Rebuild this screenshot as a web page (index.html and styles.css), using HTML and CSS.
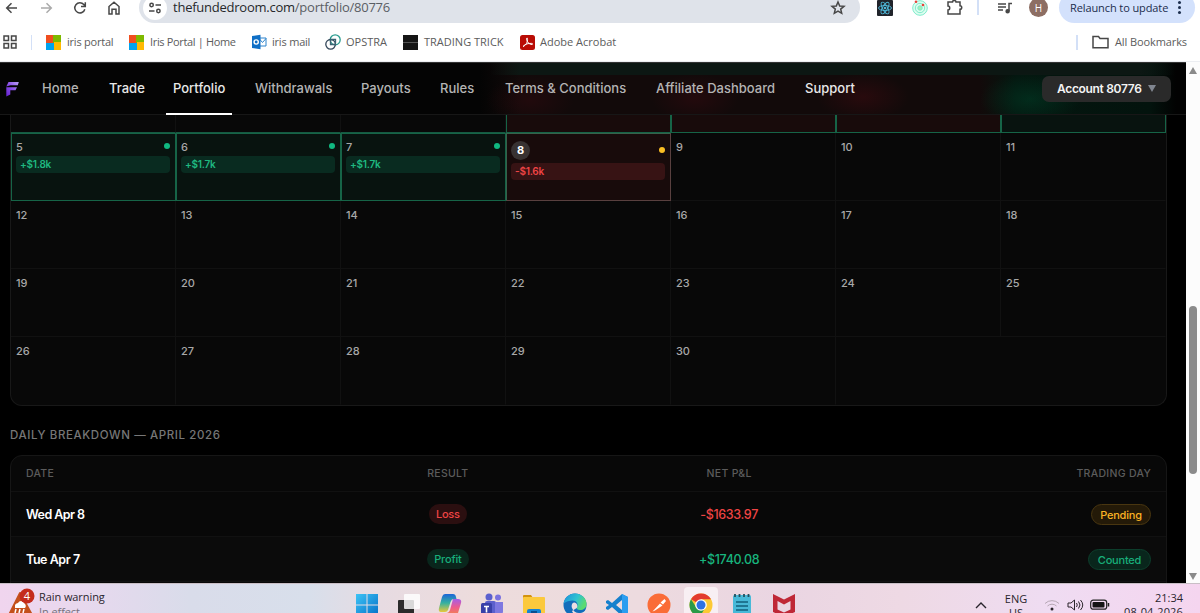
FILE: index.html
```html
<!DOCTYPE html>
<html lang="en">
<head>
<meta charset="utf-8">
<title>Portfolio</title>
<link rel="stylesheet" href="styles.css">
</head>
<body>
<header class="toolbar">
  <div class="nav-icons">
    <svg width="16" height="16" viewBox="0 0 16 16" class="ico"><path d="M13 8H3M7.500 3.200 2.700 8l4.800 4.800"/></svg>
    <svg width="16" height="16" viewBox="0 0 16 16" class="ico dim"><path d="M3 8h10M8.500 3.200 13.300 8l-4.800 4.800"/></svg>
    <svg width="16" height="16" viewBox="0 0 16 16" class="ico"><path d="M12.800 9.200A5.100 5.100 0 1 1 11.800 4.600L13 6M13.300 2.200V6.400H9"/></svg>
    <svg width="16" height="16" viewBox="0 0 16 16" class="ico"><path d="M3 14V6.500L8 2.300l5 4.200V14H10V9.300H6V14Z"/></svg>
  </div>
  <div class="address">
    <span class="site-info"><svg width="14" height="14" viewBox="0 0 14 14" class="ico"><circle cx="3.600" cy="4" r="1.700"/><path d="M7.500 4H13M1 10h5.500"/><circle cx="10.400" cy="10" r="1.700"/></svg></span>
    <span class="url"><b>thefundedroom.com</b>/portfolio/80776</span>
    <svg width="16" height="16" viewBox="0 0 16 16" class="ico star"><path d="m8 2 1.700 4 4.300.3-3.300 2.800 1 4.200L8 11.100l-3.700 2.200 1-4.200L2 6.300 6.300 6Z"/></svg>
  </div>
  <div class="extensions">
    <svg class="x-react" width="16" height="16" viewBox="0 0 16 16"><rect width="16" height="16" rx="1" fill="#20232a"/><g fill="none" stroke="#4fb9da" stroke-width=".9"><ellipse cx="8" cy="8" rx="6.500" ry="2.500"/><ellipse cx="8" cy="8" rx="6.500" ry="2.500" transform="rotate(60 8 8)"/><ellipse cx="8" cy="8" rx="6.500" ry="2.500" transform="rotate(120 8 8)"/></g><circle cx="8" cy="8" r="1.300" fill="#4fb9da"/></svg>
    <svg class="x-radar" width="16" height="16" viewBox="0 0 16 16"><g fill="#dffdf0" stroke="#7deccb"><circle cx="8" cy="8" r="7.300"/><circle cx="8" cy="8" r="4.700"/><circle cx="8" cy="8" r="2.200" fill="#a8efb6"/></g><circle cx="4" cy="1.800" r="1.300" fill="#e8433a"/><circle cx="11" cy="5" r="1.300" fill="#e8433a"/></svg>
    <svg class="x-puzzle ico" width="17" height="17" viewBox="0 0 17 17"><path d="M2 3h4.500c0-2 3.500-2 3.500 0h4v3.700c2.300 0 2.300 3.600 0 3.600V15H2v-4c2.300 0 2.300-4 0-4Z"/></svg>
    <i class="divider"></i>
    <svg class="x-music ico" width="16" height="14" viewBox="0 0 16 14"><path d="M1 3h8M1 6h8M1 9h5M12 10V2.500h3"/><circle cx="10.600" cy="10.300" r="1.500" fill="#474747"/></svg>
    <span class="avatar">H</span>
    <span class="relaunch"><span class="relaunch-text">Relaunch to update</span><i class="kebab"></i></span>
  </div>
</header>

<nav class="bookmarks">
  <svg class="ico apps" width="14" height="14" viewBox="0 0 14 14"><path d="M1 1h4.500v4.500H1ZM8.500 1H13v4.500H8.500ZM1 8.500h4.500V13H1ZM8.500 8.500H13V13H8.500Z"/></svg>
  <i class="divider"></i>
  <span class="bm bm1"><i class="ms"></i><span>iris portal</span></span>
  <span class="bm bm2"><i class="ms"></i><span>Iris Portal | Home</span></span>
  <span class="bm bm3"><svg width="16" height="16" viewBox="0 0 16 16"><path d="M8 4h7v8H8Z" fill="#fff" stroke="#2c83cc"/><path d="m8 4.500 3.500 4L15 4.500" fill="none" stroke="#2c83cc"/><path d="M1 2 9.500.7v14.600L1 14Z" fill="#0f6fc6"/><circle cx="5.200" cy="8" r="2.100" fill="none" stroke="#fff" stroke-width="1.400"/></svg><span>iris mail</span></span>
  <span class="bm bm4"><svg width="16" height="16" viewBox="0 0 16 16" fill="none" stroke-width="1.300"><circle cx="10.200" cy="5.800" r="5" stroke="#2a9c8f"/><circle cx="5.600" cy="10.300" r="4.800" stroke="#34475a"/><path d="M5.500 5.500h5v5h-5Z" stroke="#3b6373"/></svg><span>OPSTRA</span></span>
  <span class="bm bm5"><i class="black"></i><span>TRADING TRICK</span></span>
  <span class="bm bm6"><svg width="15" height="15" viewBox="0 0 15 15"><rect width="15" height="15" rx="2.500" fill="#b90c05"/><path d="M3 11.500c3-1 5-5 4.500-8-.2-1-1.200-.5-1 .7.500 3 3 5.500 5.500 5.300 1-.1.800-1-.3-1.100C8.500 8.200 5 9 3 11.500Z" fill="none" stroke="#fff" stroke-width="1"/></svg><span>Adobe Acrobat</span></span>
  <span class="all-bm"><i class="divider"></i><svg class="ico" width="17" height="14" viewBox="0 0 17 14"><path d="M1 1.500h5.500l1.500 2h8v9.200H1Z"/></svg><span>All Bookmarks</span></span>
</nav>

<div class="viewport">
  <main class="page">
    <div class="site-nav">
      <svg class="logo" width="14" height="16" viewBox="0 0 14 16"><defs><linearGradient id="lg" x1="1" y1="0" x2="0" y2="1"><stop offset="0" stop-color="#b9a0f5"/><stop offset=".5" stop-color="#8b4fe8"/><stop offset="1" stop-color="#6420d0"/></linearGradient></defs><path d="M3.500 1h10.300l-1 3.200H5.500L1.300 5.500ZM1.300 6.300H12l-1.500 3H5.300V13.500L1.300 15.500Z" fill="url(#lg)"/></svg>
      <div class="links">
        <a class="l1">Home</a><a class="l2 bright">Trade</a><a class="l3 bright active">Portfolio</a><a class="l4">Withdrawals</a><a class="l5">Payouts</a><a class="l6">Rules</a><a class="l7">Terms &amp; Conditions</a><a class="l8">Affiliate Dashboard</a><a class="l9 bright">Support</a>
      </div>
      <div class="account"><span>Account 80776</span><i></i></div>
    </div>

    <section class="calendar">
      <div class="cell"></div><div class="cell"></div><div class="cell"></div>
      <div class="cell loss counted"></div><div class="cell loss counted"></div><div class="cell loss counted"></div><div class="cell profit counted"></div>

      <div class="cell profit counted"><div class="top"><span>5</span><i class="dot"></i></div><div class="amount">+$1.8k</div></div>
      <div class="cell profit counted"><div class="top"><span>6</span><i class="dot"></i></div><div class="amount">+$1.7k</div></div>
      <div class="cell profit counted"><div class="top"><span>7</span><i class="dot"></i></div><div class="amount">+$1.7k</div></div>
      <div class="cell loss today"><div class="top"><span class="badge">8</span><i class="dot"></i></div><div class="amount">-$1.6k</div></div>
      <div class="cell"><div class="top">9</div></div>
      <div class="cell"><div class="top">10</div></div>
      <div class="cell"><div class="top">11</div></div>

      <div class="cell"><div class="top">12</div></div><div class="cell"><div class="top">13</div></div><div class="cell"><div class="top">14</div></div><div class="cell"><div class="top">15</div></div><div class="cell"><div class="top">16</div></div><div class="cell"><div class="top">17</div></div><div class="cell"><div class="top">18</div></div>
      <div class="cell"><div class="top">19</div></div><div class="cell"><div class="top">20</div></div><div class="cell"><div class="top">21</div></div><div class="cell"><div class="top">22</div></div><div class="cell"><div class="top">23</div></div><div class="cell"><div class="top">24</div></div><div class="cell"><div class="top">25</div></div>
      <div class="cell"><div class="top">26</div></div><div class="cell"><div class="top">27</div></div><div class="cell"><div class="top">28</div></div><div class="cell"><div class="top">29</div></div><div class="cell"><div class="top">30</div></div>
    </section>

    <h2 class="heading">DAILY BREAKDOWN — APRIL 2026</h2>

    <section class="table">
      <div class="row head"><span>DATE</span><span>RESULT</span><span>NET P&amp;L</span><span>TRADING DAY</span></div>
      <div class="row"><span class="date">Wed Apr 8</span><span><em class="pill red w38">Loss</em></span><span class="net neg">-$1633.97</span><span><em class="pill amber">Pending</em></span></div>
      <div class="row"><span class="date">Tue Apr 7</span><span><em class="pill green w42">Profit</em></span><span class="net pos">+$1740.08</span><span><em class="pill green lined">Counted</em></span></div>
    </section>
  </main>
  <aside class="scrollbar"><i class="up"></i><i class="thumb"></i><i class="down"></i></aside>
</div>

<footer class="taskbar">
  <div class="weather">
    <svg width="28" height="28" viewBox="0 0 28 28"><path d="M12 5 24 27H1Z" fill="#c4501b" stroke="#c4501b" stroke-width="2" stroke-linejoin="round"/><path d="M7 19a3.500 3.500 0 0 1 3-4 3.500 3.500 0 0 1 6.500.5A3 3 0 0 1 17 20H7Z" fill="#fff"/><path d="m8 21-1 4M12 21l-1 4M16 21l-1 4" stroke="#fff" stroke-width="1.500"/><circle cx="19" cy="8" r="7.500" fill="#c42b1c"/><text x="19" y="12" text-anchor="middle" class="count">4</text></svg>
    <div class="weather-text"><span class="w1">Rain warning</span><span class="w2">In effect</span></div>
  </div>
  <div class="apps-row">
    <svg viewBox="0 0 24 24"><defs><linearGradient id="wg" x1="0" y1="0" x2="1" y2="1"><stop offset="0" stop-color="#3cc3f5"/><stop offset="1" stop-color="#0670c8"/></linearGradient></defs><path d="M1 1h10.500v10.500H1ZM12.500 1H23v10.500H12.500ZM1 12.500h10.500V23H1ZM12.500 12.500H23V23H12.500Z" fill="url(#wg)"/></svg>
    <svg viewBox="0 0 24 24"><rect x="1" y="7" width="16" height="15" rx="1" fill="#2b2b2b"/><rect x="7" y="1" width="16" height="15" rx="1" fill="#fff" fill-opacity=".82"/></svg>
    <svg viewBox="0 0 24 24"><defs><linearGradient id="cg" x1="0" y1="0" x2="0" y2="1"><stop offset="0" stop-color="#1b66d8"/><stop offset=".5" stop-color="#35b1a0"/><stop offset="1" stop-color="#e8c83a"/></linearGradient><linearGradient id="ch" x1="0" y1="0" x2="0" y2="1"><stop offset="0" stop-color="#a65ce8"/><stop offset=".5" stop-color="#ee5b8c"/><stop offset="1" stop-color="#f28b45"/></linearGradient></defs><path d="M7 1h8q2.500 0 3 3l.5 2h-3q-2 0-3 3l-2.500 8q-.8 2-3 2H3q-3 0-2-4L4 4q.8-3 3-3Z" fill="url(#cg)"/><path d="M15 6h5q4 0 3 4l-3 10q-1 3-4 3H8q-2 0-2.500-3H9q2 0 3-3Z" fill="url(#ch)"/></svg>
    <svg viewBox="0 0 24 24"><circle cx="9" cy="4" r="3.500" fill="#5b60ce"/><circle cx="18" cy="4.500" r="3" fill="#7b72df"/><rect x="5" y="8" width="11" height="15" rx="2" fill="#5b5fcc"/><path d="M15 9h8v9q0 4-4 5h-4Z" fill="#7e78e0"/><rect x="1" y="10" width="11" height="13" rx="1.500" fill="#3940a8"/><path d="M4 13.500h5M6.500 13.500v6" stroke="#fff" stroke-width="1.600"/></svg>
    <svg viewBox="0 0 24 24"><path d="M1 3q0-1 1-1h7l2 3H1Z" fill="#d3930f"/><rect y="4" x="1" width="22" height="19" rx="1" fill="#fbc93d"/><path d="M5 23v-5q0-2 2-2h10q2 0 2 2v5Z" fill="#1683d4"/><path d="M9 19h6" stroke="#0a4d90" stroke-width="2"/></svg>
    <svg viewBox="0 0 24 24"><defs><linearGradient id="eg" x1="0" y1="0" x2="1" y2=".4"><stop offset="0" stop-color="#1c8fdc"/><stop offset=".6" stop-color="#2fc3d0"/><stop offset="1" stop-color="#5bdb70"/></linearGradient></defs><circle cx="12" cy="12" r="11.500" fill="#126dbb"/><path d="M.7 11C1 5 6 .5 12 .5S23.500 5 23.500 11c0 4-3 6-6.500 6-3 0-4-1.500-3-3 2-3-1-7-5-6.500C5 8 1.500 9 .7 11Z" fill="url(#eg)"/><path d="M13.700 15c1.500-2 .3-5-2.200-5.500-2.500 0-3.500 3-2.500 5.500 1 3 4 5 7 5 3 .2 5-1 7-3l1 7h-6c-4 0-8-3-9-6Z" fill="#eadde2"/></svg>
    <svg viewBox="0 0 24 24"><path d="M17 1 23 4v16l-6 3L7 14l-4 3-2-1v-2l3-2-3-2V8l2-1 4 3Zm0 6-6 5 6 5Z" fill="#1680cd"/><path d="m17 1 6 3v16l-6 3Z" fill="#2b9df0"/></svg>
    <svg viewBox="0 0 24 24"><circle cx="12" cy="12" r="11.500" fill="#fa6c37"/><path d="m5.500 18.500 7.500-8 2.500 2L8 17.500ZM13.500 9.500 17.500 6l1.500 2-3 3.500Z" fill="#fff"/></svg>
    <span class="current"><svg viewBox="0 0 24 24"><circle cx="12" cy="12" r="11.500" fill="#fcc934"/><path d="M12 12 2 6.300A11.500 11.500 0 0 1 22 6.300H12Z" fill="#e33b2e"/><path d="M2 6.300A11.500 11.500 0 0 0 11 23.500l5-8.500-9-1Z" fill="#2b9a48"/><circle cx="12" cy="12" r="5.800" fill="#fff"/><circle cx="12" cy="12" r="4.500" fill="#2d72e4"/></svg></span>
    <svg viewBox="0 0 24 24"><rect x="3" y="2" width="18" height="22" rx="1.500" fill="#48b9d8"/><path d="M6 9h12M6 13h12M6 17h12" stroke="#12607c" stroke-width="1.700"/><path d="M5 1v3M9.500 1v3M14 1v3M18.500 1v3" stroke="#24505f" stroke-width="1.800"/></svg>
    <svg viewBox="0 0 24 24"><path d="m1 1 11 5.500L23 1v18l-11 5L1 19Zm4.500 7v8.500L12 19.500l6.500-3V8L12 11.500Z" fill="#bf2736" fill-rule="evenodd"/></svg>
  </div>
  <div class="tray">
    <svg class="chev" width="12" height="8" viewBox="0 0 12 8"><path d="m1 7 5-5 5 5" fill="none" stroke="#29242c" stroke-width="1.400"/></svg>
    <span class="lang">ENG<br>US</span>
    <svg class="wifi" width="16" height="14" viewBox="0 0 16 14"><g fill="none" stroke="#b6a7b4"><path d="M1 5.500a10 10 0 0 1 14 0M3.500 8a6.500 6.500 0 0 1 9 0"/></g><circle cx="8" cy="11" r="1.500" fill="#292329"/></svg>
    <svg class="sound" width="17" height="14" viewBox="0 0 17 14"><path d="M1 5h3l3.500-3v10L4 9H1ZM9.500 5q1.500 2 0 4M11.500 3.500q3 3.500 0 7M13.500 2q4.500 5 0 10" fill="none" stroke="#2a252b"/></svg>
    <svg class="battery" width="20" height="12" viewBox="0 0 20 12"><rect x=".7" y="1.200" width="16" height="9" rx="2.500" fill="none" stroke="#222" stroke-width="1.200"/><rect x="2.500" y="3" width="12" height="5.500" rx="1" fill="#151515"/><path d="M18.500 4v3.500" stroke="#222" stroke-width="1.500"/></svg>
    <span class="clock">21:34<br><span class="day">08-04-2026</span></span>
  </div>
</footer>
</body>
</html>
```

FILE: styles.css
```css
* { box-sizing: border-box; }
body { margin: 0; width: 1200px; height: 613px; overflow: hidden; display: flex; flex-direction: column; background: #fff; font-family: "Open Sans", "Noto Sans", sans-serif; }
svg { display: block; flex: none; }
.ico { fill: none; stroke: #474747; stroke-width: 1.5; }
.dim { stroke: #aaa; }
.divider { width: 2px; height: 15px; background: #d3e0f7; flex: none; }

/* browser toolbar */
.toolbar { height: 31px; margin-top: -8px; display: flex; align-items: center; flex: none; }
.nav-icons { display: flex; gap: 18px; padding-left: 4px; width: 139px; flex: none; }
.address { width: 721px; height: 31px; border-radius: 16px; background: #dfe3ea; display: flex; align-items: center; padding: 0 14px 0 4px; }
.site-info { width: 24px; height: 24px; border-radius: 50%; background: #fff; display: grid; place-items: center; }
.url { margin: -2px 0 0 6px; font-size: 13px; letter-spacing: -.24px; color: #5a5e64; white-space: nowrap; }
.url b { font-weight: 400; color: #26282b; }
.star { margin-left: auto; }
.extensions { display: flex; align-items: center; flex: 1; }
.x-react { margin-left: 17px; }
.x-radar { margin-left: 19px; }
.x-puzzle { margin-left: 18px; }
.extensions .divider { margin-left: 14px; }
.x-music { margin-left: 18px; }
.avatar { margin-left: 16px; width: 19px; height: 19px; border-radius: 50%; background: #8d6e63; color: #fff; font-size: 10px; display: grid; place-items: center; }
.relaunch { margin-left: 11px; width: 136px; height: 31px; border-radius: 16px; background: #d3e1fc; display: flex; align-items: center; padding-left: 11px; color: #1c2d4d; }
.relaunch-text { width: 98px; font-size: 11px; letter-spacing: -.1px; white-space: nowrap; margin-top: -1px; }
.kebab { width: 3px; height: 3px; margin-left: 10px; border-radius: 50%; background: #1c2d4d; box-shadow: 0 -5px #1c2d4d, 0 5px #1c2d4d; }

.bookmarks { height: 39px; flex: none; display: flex; align-items: center; font-size: 11px; color: #5c5c5c; border-bottom: 1px solid #eceef2; }
.bookmarks span > span { margin-top: -2px; }
.apps { margin-left: 3px; }
.bookmarks > .divider { margin-left: 14px; width: 1px; }
.bm { display: flex; align-items: center; gap: 6px; white-space: nowrap; flex: none; }
.bm1 { margin-left: 14px; width: 83px; letter-spacing: -.22px; }
.bm2 { width: 122px; letter-spacing: -.34px; }
.bm3 { width: 74px; gap: 5px; letter-spacing: -.2px; }
.bm4 { width: 78px; gap: 5px; }
.bm5 { width: 117px; }
.bm6 { gap: 5px; }
.ms { width: 15px; height: 15px; background: conic-gradient(#7eb900 25%, #ffb902 0 50%, #01a3ee 0 75%, #f04e1f 0); }
.black { width: 15px; height: 15px; background: linear-gradient(#151515 45%, #555 0 55%, #151515 0); }
.all-bm { margin-left: auto; width: 124px; display: flex; align-items: center; white-space: nowrap; letter-spacing: -.1px; }
.all-bm svg { margin: 0 6px 0 14px; }

/* page */
.viewport { height: 521px; flex: none; display: flex; overflow: hidden; }
.page { width: 1186px; background: #000; font-family: Inter, "Liberation Sans", sans-serif; border-top: 1px solid #333; overflow: hidden; }
.site-nav { height: 52px; display: flex; align-items: center; padding: 0 15px 0 5px; border-bottom: 1px solid #171717;
  background:
    radial-gradient(ellipse 44px 24px at 530px 37px, #380a1066, transparent),
    radial-gradient(ellipse 44px 24px at 695px 35px, #380a1077, transparent),
    radial-gradient(ellipse 46px 24px at 863px 34px, #4a0b1266, transparent),
    radial-gradient(ellipse 50px 26px at 1030px 36px, #00452b77, transparent),
    linear-gradient(90deg, transparent, #0c1713 30px, #0c1713 650px, transparent 685px) 490px 0 / 690px 12px no-repeat,
    linear-gradient(90deg, #040404 480px, #120a0a 520px, #120a0a 980px, #04160f 1015px, #03130d 1150px, #020202 1176px); }
.links { display: flex; gap: 16px; margin-left: 16px; height: 51px; }
.links a { padding: 0 7px; font-size: 13px; font-weight: 500; line-height: 51px; color: #b4b4b4; white-space: nowrap; height: 52px; letter-spacing: 0; }
.links .bright { color: #e8e8e8; }
.links .active { border-bottom: 2px solid #fff; }
.l1 { width: 51px; } .l2 { width: 48px; } .l3 { width: 66px; } .l4 { width: 90px; } .l5 { width: 63px; } .l6 { width: 49px; } .l7 { width: 135px; } .l8 { width: 133px; } .l9 { width: 63px; }
.account { margin-left: auto; width: 129px; height: 26px; border-radius: 7px; background: #2a2a2a; color: #f4f4f4; font-size: 12px; font-weight: 600; letter-spacing: -.32px; display: flex; align-items: center; padding-left: 15px; gap: 6px; white-space: nowrap; }
.account i { border: 4px solid transparent; border-top: 7px solid #808690; border-bottom: 0; }

.calendar { width: 1157px; height: 291px; margin-left: 10px; display: grid; grid-template-columns: repeat(7, 1fr); grid-template-rows: 18px repeat(4, 68px); background: #080808; border: 1px solid #181818; border-top: 0; border-radius: 0 0 12px 12px; }
.cell { border: 1px solid #111; border-width: 0 1px 1px 0; padding: 6px 5px; font-size: 11px; font-weight: 500; letter-spacing: -.1px; color: #a8a8a8; min-width: 0; }
.cell:nth-child(7n):not(.counted) { border-right-color: transparent; }
.cell:nth-child(n+29) { border-bottom-color: transparent; }
.cell:nth-child(-n+3) { border-bottom-color: #165a42; }
.profit { background: #08130f; }
.loss { background: #180b0b; }
.counted { border: 1px solid #166447; padding: 5px 5px 5px 4px; }
.counted:nth-child(-n+7) { border-top: 0; padding: 0; }
.top { display: flex; justify-content: space-between; line-height: 16px; }
.dot { width: 6px; height: 6px; border-radius: 50%; background: #10b981; margin: 4px 0 0; }
.amount { height: 17px; margin-top: 1px; border-radius: 4px; background: #092b20; color: #1fb981; font-size: 10px; font-weight: 600; line-height: 17px; padding-left: 4px; letter-spacing: -.25px; }
.today { border: 1px solid #59403f; border-top-color: #37614b; border-left-color: #37614b; padding: 6px 5px 5px 4px; }
.today .top { align-items: center; height: 20px; }
.today .dot { background: #fbbf24; margin: 0 0 1px; }
.today .amount { background: #371314; color: #ee4444; margin-top: 3px; }
.badge { width: 19px; height: 19px; border-radius: 50%; background: #383232; color: #fff; font-weight: 700; display: grid; place-items: center; }

.heading { margin: 22px 0 0 10px; font-size: 11.5px; line-height: 15px; font-weight: 500; letter-spacing: .61px; color: #777; }
.table { width: 1157px; height: 140px; margin: 12px 0 0 10px; border: 1px solid #161616; border-radius: 12px; background: #080808; overflow: hidden; }
.row { height: 45px; display: grid; grid-template-columns: repeat(4, 1fr); align-items: center; padding: 0 15px; border-bottom: 1px solid #111; font-size: 12.5px; }
.row + .row + .row { background: #0b0b0b; }
.head { height: 36px; font-size: 10.5px; font-weight: 500; letter-spacing: .3px; color: #5c5c5c; }
.row span { text-align: center; }
.row span:first-child { text-align: left; }
.row span:last-child { text-align: right; }
.date { color: #fff; font-weight: 600; letter-spacing: -.55px; }
.row:last-child .date { letter-spacing: -.45px; }
.net { font-weight: 500; letter-spacing: -.35px; }
.neg { color: #ef4444; }
.pos { color: #18b57e; }
.pill { display: inline-block; font-style: normal; font-size: 11px; font-weight: 500; letter-spacing: -.2px; height: 20px; line-height: 21px; border-radius: 10.5px; text-align: center; vertical-align: middle; }
.red { background: #2b0f10; color: #ef4444; }
.green { background: #09261c; color: #18ae7a; }
.amber { width: 60px; background: #241a08; color: #fbb324; border: 1px solid #493610; line-height: 20px; height: 21px; }
.lined { width: 63px; border: 1px solid #0d3e2c; line-height: 20px; height: 21px; }
.w38 { width: 38px; } .w42 { width: 42px; }

.scrollbar { width: 14px; background: #fcfcfc; display: flex; flex-direction: column; align-items: center; padding-top: 5px; }
.scrollbar .up { border: 4.5px solid transparent; border-bottom: 7px solid #8a8a8a; border-top: 0; }
.scrollbar .thumb { width: 8px; height: 168px; border-radius: 4px; background: #8b8b8b; margin-top: 232px; }
.scrollbar .down { border: 4.5px solid transparent; border-top: 7px solid #8a8a8a; border-bottom: 0; margin-top: 99px; }

/* taskbar */
.taskbar { height: 30px; flex: none; display: flex; overflow: hidden; border-top: 1px solid #c9bfc6; background: linear-gradient(90deg, #f0d5ee 0, #e8d8ee 80px, #d9dcea 190px, #d8dfeb 310px, #e7dbe2 380px, #eddcdc 480px, #eddbdf 640px, #ead5e2 780px, #eed9e4 900px, #efdcf2 1050px, #f5d5ef 1200px); }
.weather { width: 355px; display: flex; padding: 4px 0 0 8px; }
.count { fill: #fff; font: 11px "Open Sans", sans-serif; }
.weather-text { margin-left: 3px; display: flex; flex-direction: column; font-size: 11px; line-height: 14.5px; letter-spacing: -.08px; color: #2a252d; padding-top: 2px; }
.weather .w2 { color: #77717b; }
.apps-row { display: flex; gap: 17.7px; padding-top: 9px; }
.apps-row svg { width: 24px; height: 24px; }
.current { margin: -6px -5px 0; padding: 6px 5px 0; background: #f8eff3; border-radius: 4px; height: 40px; }
.tray { margin-left: auto; display: flex; align-items: flex-start; font-size: 11px; line-height: 13.5px; color: #2a252d; }
.chev { margin-top: 17px; }
.lang { margin: 8px 0 0 16px; width: 26px; text-align: center; }
.wifi { margin: 14px 0 0 15px; }
.sound { margin: 14px 0 0 7px; }
.battery { margin: 15px 0 0 6px; }
.clock { margin: 7px 17px 0 12px; width: 61px; text-align: right; white-space: nowrap; }
.day { letter-spacing: .15px; }
```
